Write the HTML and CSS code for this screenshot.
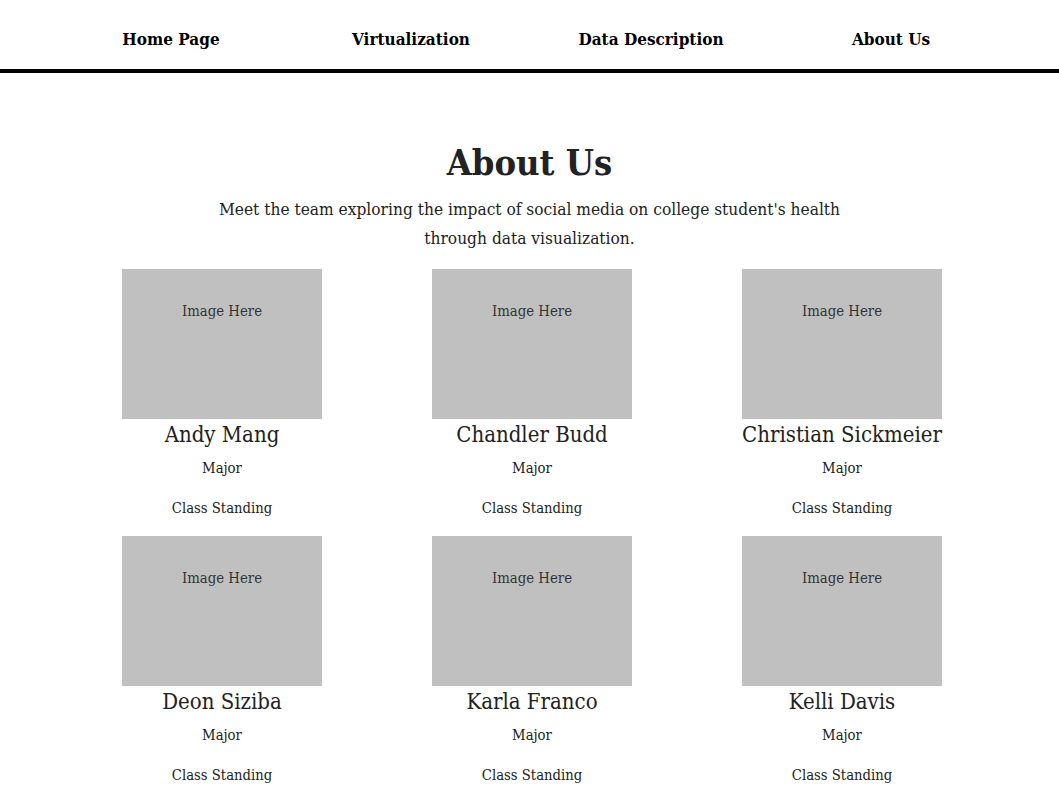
FILE: index.html
```html
<!DOCTYPE html>
<html lang="en">
<head>
<meta charset="utf-8">
<title>About Us</title>
<link rel="stylesheet" href="styles.css">
</head>
<body>
<nav class="topnav">
  <a class="nav-link" href="#">Home Page</a>
  <a class="nav-link" href="#">Virtualization</a>
  <a class="nav-link" href="#">Data Description</a>
  <a class="nav-link" href="#">About Us</a>
</nav>
<main class="about">
  <h1 class="title">About Us</h1>
  <p class="intro">Meet the team exploring the impact of social media on college student's health through data visualization.</p>
  <section class="team">
    <div class="member">
      <div class="photo">Image Here</div>
      <h2 class="name">Andy Mang</h2>
      <p class="info">Major</p>
      <p class="info standing">Class Standing</p>
    </div>
    <div class="member">
      <div class="photo">Image Here</div>
      <h2 class="name">Chandler Budd</h2>
      <p class="info">Major</p>
      <p class="info standing">Class Standing</p>
    </div>
    <div class="member">
      <div class="photo">Image Here</div>
      <h2 class="name">Christian Sickmeier</h2>
      <p class="info">Major</p>
      <p class="info standing">Class Standing</p>
    </div>
    <div class="member">
      <div class="photo">Image Here</div>
      <h2 class="name">Deon Siziba</h2>
      <p class="info">Major</p>
      <p class="info standing">Class Standing</p>
    </div>
    <div class="member">
      <div class="photo">Image Here</div>
      <h2 class="name">Karla Franco</h2>
      <p class="info">Major</p>
      <p class="info standing">Class Standing</p>
    </div>
    <div class="member">
      <div class="photo">Image Here</div>
      <h2 class="name">Kelli Davis</h2>
      <p class="info">Major</p>
      <p class="info standing">Class Standing</p>
    </div>
  </section>
</main>
</body>
</html>
```
FILE: styles.css
```css
html, body {
  margin: 0;
  padding: 0;
  background: #ffffff;
}
body {
  font-family: "DejaVu Serif Condensed", "DejaVu Serif", serif;
  color: #222222;
}
.topnav {
  display: grid;
  grid-template-columns: repeat(4, 240px);
  justify-content: center;
  align-items: center;
  height: 73px;
  box-sizing: border-box;
  padding: 9px 0 0 3px;
  border-bottom: 4px solid #000000;
}
.nav-link {
  text-align: center;
  font-size: 17px;
  font-weight: bold;
  color: #000000;
  text-decoration: none;
  line-height: 22px;
}
.about {
  padding-top: 67px;
}
.title {
  margin: 0;
  text-align: center;
  font-size: 36px;
  line-height: 44px;
  font-weight: bold;
  color: #222222;
}
.intro {
  margin: 11px auto 0;
  max-width: 640px;
  text-align: center;
  font-size: 17.2px;
  line-height: 29px;
  color: #222222;
}
.team {
  display: grid;
  grid-template-columns: repeat(3, 310px);
  justify-content: center;
  row-gap: 18px;
  margin-top: 16px;
  padding-left: 5px;
}
.member {
  display: flex;
  flex-direction: column;
  align-items: center;
  text-align: center;
}
.photo {
  width: 200px;
  height: 150px;
  box-sizing: border-box;
  padding-top: 33px;
  background: #c0c0c0;
  font-size: 14.8px;
  line-height: 18px;
  color: #333333;
}
.name {
  margin: 1px 0 0;
  font-size: 22px;
  font-weight: normal;
  line-height: 30px;
  color: #222222;
  white-space: nowrap;
}
.info {
  margin: 8px 0 0;
  font-size: 14.7px;
  line-height: 20px;
  color: #222222;
}
.info.standing {
  margin-top: 20px;
}
```
